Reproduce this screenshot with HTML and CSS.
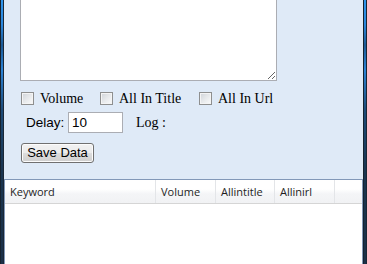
FILE: index.html
```html
<!DOCTYPE html>
<html>
<head>
<meta charset="utf-8">
<link rel="stylesheet" href="styles.css">
</head>
<body>
<div class="window">
  <div class="frame frame-left"></div>
  <div class="client">
    <div class="top">
      <textarea class="memo"></textarea>
    </div>
    <div class="checks">
      <label class="check c1"><input type="checkbox" class="box"><span>Volume</span></label>
      <label class="check c2"><input type="checkbox" class="box"><span>All In Title</span></label>
      <label class="check c3"><input type="checkbox" class="box"><span>All In Url</span></label>
    </div>
    <div class="delay-row">
      <span class="delay-label">Delay:</span>
      <input class="delay-input" type="text" value="10">
      <span class="log-label">Log :</span>
    </div>
    <div class="btn-row">
      <button class="save-btn">Save Data</button>
    </div>
    <div class="listview">
      <div class="lv-header">
        <div class="col col-keyword">Keyword</div>
        <div class="col col-volume">Volume</div>
        <div class="col col-title">Allintitle</div>
        <div class="col col-url">Allinirl</div>
        <div class="col col-rest"></div>
      </div>
      <div class="lv-body"></div>
    </div>
  </div>
  <div class="frame frame-right"></div>
</div>
</body>
</html>
```
FILE: styles.css
```css
html, body {
  margin: 0;
  padding: 0;
  width: 367px;
  height: 264px;
  overflow: hidden;
  background: #dfeaf7;
}

.window {
  display: flex;
  height: 264px;
}

.frame {
  width: 2px;
  border-left: 1px solid #16222f;
  border-right: 1px solid #1a2736;
  background: linear-gradient(to bottom, #2f95ec 0px, #2a86dc 25px, #1c5a95 45px, #2b83d6 70px, #1d4b78 110px, #1a3550 170px, #1b3048 264px);
}

.client {
  flex: 1;
  display: flex;
  flex-direction: column;
  background: #dfeaf7;
  min-width: 0;
}

.top {
  padding-left: 16px;
  height: 81px;
  overflow: hidden;
}

.memo {
  display: block;
  box-sizing: border-box;
  width: 257px;
  height: 91px;
  margin: -10px 0 0 0;
  border: 1px solid #abadb3;
  background: #ffffff;
  resize: both;
  padding: 0;
  outline: none;
}

.checks {
  display: flex;
  align-items: center;
  height: 13px;
  margin-top: 11px;
  padding-left: 17px;
  font-family: "Liberation Serif", serif;
  font-size: 14px;
  color: #000;
}

.check {
  display: flex;
  align-items: center;
  gap: 6px;
  line-height: 13px;
}

.c1 { width: 79px; }
.c2 { width: 99px; }

.box {
  appearance: none;
  -webkit-appearance: none;
  box-sizing: border-box;
  width: 13px;
  height: 13px;
  margin: 0;
  border: 1px solid #8e8f8f;
  background: linear-gradient(135deg, #cfd3d8 0%, #e7e9eb 50%, #fbfbfb 100%);
  box-shadow: inset 0 0 0 1px #f4f4f4;
  flex: none;
}

.delay-row {
  display: flex;
  align-items: center;
  height: 21px;
  margin-top: 7px;
  padding-left: 22px;
}

.delay-label {
  font-family: "Liberation Sans", Arial, sans-serif;
  font-size: 13.5px;
  color: #000;
  width: 42px;
}

.delay-input {
  box-sizing: border-box;
  width: 55px;
  height: 21px;
  margin: 0;
  border: 1px solid #abadb3;
  padding: 0 0 0 3px;
  font-family: "Liberation Sans", Arial, sans-serif;
  font-size: 13.5px;
  color: #000;
  background: #fff;
  outline: none;
}

.log-label {
  margin-left: 13px;
  font-family: "Liberation Serif", serif;
  font-size: 14px;
  color: #000;
}

.btn-row {
  display: flex;
  margin-top: 10px;
  padding-left: 17px;
}

.save-btn {
  box-sizing: border-box;
  width: 73px;
  height: 20px;
  margin: 0;
  padding: 0;
  border: 1px solid #707070;
  border-radius: 3px;
  background: linear-gradient(to bottom, #f2f2f2 0%, #ebebeb 50%, #dddddd 51%, #cfcfcf 100%);
  box-shadow: inset 0 0 0 1px #fcfcfc;
  font-family: "Liberation Sans", Arial, sans-serif;
  font-size: 13px;
  color: #000;
  line-height: 18px;
}

.listview {
  margin-top: 16px;
  flex: 1;
  border: 1px solid #8298b8;
  border-bottom: none;
  background: #fff;
  display: flex;
  flex-direction: column;
}

.lv-header {
  display: flex;
  height: 23px;
  border-bottom: 1px solid #d5d5d5;
  background: linear-gradient(to bottom, #ffffff 0%, #ffffff 40%, #f4f5f7 60%, #f1f2f4 100%);
  font-family: "Open Sans", sans-serif;
  font-size: 11px;
  color: #1e1e1e;
}

.col {
  box-sizing: border-box;
  height: 23px;
  line-height: 23px;
  padding-left: 5px;
  border-right: 1px solid #e3e5e8;
  white-space: nowrap;
  overflow: hidden;
}

.col-keyword { width: 151px; }
.col-volume { width: 60px; }
.col-title { width: 59px; }
.col-url { width: 60px; }
.col-rest { flex: 1; border-right: none; }

.lv-body {
  flex: 1;
  background: #fff;
}
```
